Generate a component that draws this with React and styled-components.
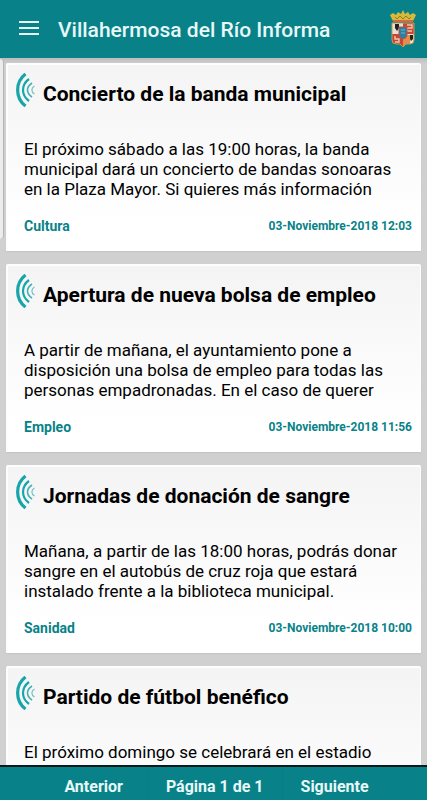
import React from 'react';
import styled, { createGlobalStyle } from 'styled-components';

const TEAL = '#088288';

const Global = createGlobalStyle`
  * { box-sizing: border-box; }
  body {
    margin: 0;
    background: #d0d0d0;
    font-family: Roboto, "Noto Sans", sans-serif;
    color: #000;
  }
`;

const Screen = styled.div`
  display: flex;
  flex-direction: column;
  height: 100vh;
  overflow: hidden;
`;

const TopBar = styled.header`
  display: flex;
  align-items: center;
  flex: none;
  height: 58px;
  padding: 0 10px 0 19px;
  background: ${TEAL};
  color: #e8f8f8;
`;

const MenuButton = styled.button`
  display: flex;
  margin: 0 19px 3px 0;
  padding: 0;
  border: 0;
  background: none;
  color: inherit;
`;

const AppTitle = styled.h1`
  flex: 1;
  margin: 2px 0 0;
  font-size: 21px;
  line-height: 24px;
  font-weight: 500;
  white-space: nowrap;
`;

const Feed = styled.main`
  position: relative;
  display: flex;
  flex-direction: column;
  gap: 13px;
  flex: 1;
  min-height: 0;
  overflow: hidden;
  padding: 5px 6px 0;
  background: linear-gradient(#bcbcbc, #d0d0d0 6px);
`;

const EdgeGlow = styled.div`
  position: absolute;
  left: 0;
  top: 1px;
  width: 4px;
  height: 180px;
  border-right: 1px solid #b4b4b4;
  border-radius: 0 4px 4px 0;
  background: #ececec;
`;

const Card = styled.article`
  flex: none;
  min-height: 188px;
  padding: 0 8px 0 16px;
  border: solid #fdfdfd;
  border-width: 2px 1px 0 2px;
  border-radius: 2px 2px 0 0;
  background: linear-gradient(#f4f4f4, #fff 85%);
  box-shadow: 0 1px 1px #c4c4c4;
`;

const CardHead = styled.div`
  display: flex;
  align-items: flex-start;
  gap: 8px;
  height: 58px;
  margin-left: -8px;
  padding-top: 8px;
`;

const CardTitle = styled.h2`
  margin: 7px 0 0;
  font-size: 21px;
  line-height: 28px;
  font-weight: 700;
  white-space: nowrap;
`;

const Excerpt = styled.p`
  margin: 16px 0 0;
  font-size: 17px;
  line-height: 20px;
  white-space: pre-line;
`;

const Meta = styled.footer`
  display: flex;
  justify-content: space-between;
  margin-top: 18px;
  line-height: 18px;
  font-weight: 700;
  color: ${TEAL};
`;

const Topic = styled.span`
  font-size: 14px;
`;

const Posted = styled.time`
  font-size: 12px;
`;

const Pager = styled.nav`
  display: flex;
  justify-content: center;
  flex: none;
  height: 35px;
  border-top: 2px solid #051a1b;
  background: ${TEAL};
`;

const pagerText = `
  padding: 4px 18px 0;
  font: 700 16px/32px Roboto, sans-serif;
  color: #e8f8f8;
`;

const PagerButton = styled.button`
  ${pagerText}
  border: 0;
  background: none;

  &:first-child {
    padding-left: 24px;
    padding-right: 24px;
  }
`;

const PagerStatus = styled.span`
  ${pagerText}
  border: solid #0b7c82;
  border-width: 0 1px;
`;

const MenuIcon = () => (
  <svg width="20" height="16" viewBox="0 0 20 16" aria-hidden="true">
    <path d="M0 2h20M0 8h20M0 14h20" stroke="currentColor" strokeWidth="2" />
  </svg>
);

const WaveIcon = () => (
  <svg width="19" height="34" viewBox="0 0 19 34" fill="none" stroke="#18a5aa" aria-hidden="true">
    <path d="M9.5 1C-1 9-1 25 9.5 33" strokeWidth="3.2" />
    <path d="M13 6C5 12 5 22 13 28" strokeWidth="2.2" />
    <path d="M16 10C10 14 10 20 16 24" strokeWidth="1.6" stroke="#45b0b4" />
    <path d="M18.5 13C15 15 15 19 18.5 21" strokeWidth="1.2" stroke="#74c0c3" />
  </svg>
);

const Crest = () => (
  <svg width="28" height="38" viewBox="0 0 28 38" role="img" aria-label="Escudo municipal">
    <path d="M4 11 1 5l3-2 3 2 2-3 3 2 2-4 2 4 3-2 2 3 3-2 3 2-3 6z" fill="#d9b93c" />
    <path d="M6 7l2 2 3-3 3 3 3-3 3 3 2-2" fill="none" stroke="#94792a" />
    <path d="M4 11h20" stroke="#cf6b45" strokeWidth="2" />
    <path d="M3 13h22v17q0 4-4 4h-4l-3 3-3-3H7q-4 0-4-4z" fill="#e9e0d4" />
    <path d="M14 13h11v11H14zM3 24h11v13l-3-3H7q-4 0-4-4z" fill="#cb4437" />
    <path d="M14 25h7v9h-4l-3 3z" fill="#e58b4c" />
    <path d="M6 14v4l2 3 2-3v-4zM21 25v4l1 2 2-2v-4z" fill="#241f22" />
    <path d="M18 15h5v3h-5v3h5M6 26v3h4v3H6" fill="none" stroke="#e7c9b4" strokeWidth="1.4" />
    <path d="M10 17h8v8q0 3-4 4-4-1-4-4z" fill="#2c7fa3" stroke="#b4553f" />
    <path d="M12 20h4M12 23h4" stroke="#75b6b9" />
    <path d="M3 13h22v17q0 4-4 4h-4l-3 3-3-3H7q-4 0-4-4z" fill="none" stroke="#c69a4b" />
  </svg>
);

const news = [
  {
    title: 'Concierto de la banda municipal',
    text: 'El próximo sábado a las 19:00 horas, la banda\nmunicipal dará un concierto de bandas sonoaras\nen la Plaza Mayor. Si quieres más información',
    topic: 'Cultura',
    date: '03-Noviembre-2018 12:03',
  },
  {
    title: 'Apertura de nueva bolsa de empleo',
    text: 'A partir de mañana, el ayuntamiento pone a\ndisposición una bolsa de empleo para todas las\npersonas empadronadas. En el caso de querer',
    topic: 'Empleo',
    date: '03-Noviembre-2018 11:56',
  },
  {
    title: 'Jornadas de donación de sangre',
    text: 'Mañana, a partir de las 18:00 horas, podrás donar\nsangre en el autobús de cruz roja que estará\ninstalado frente a la biblioteca municipal.',
    topic: 'Sanidad',
    date: '03-Noviembre-2018 10:00',
  },
  {
    title: 'Partido de fútbol benéfico',
    text: 'El próximo domingo se celebrará en el estadio',
  },
];

export default function App() {
  return (
    <Screen>
      <Global />
      <TopBar>
        <MenuButton aria-label="Abrir menú"><MenuIcon /></MenuButton>
        <AppTitle>Villahermosa del Río Informa</AppTitle>
        <Crest />
      </TopBar>
      <Feed>
        <EdgeGlow />
        {news.map((item) => (
          <Card key={item.title}>
            <CardHead>
              <WaveIcon />
              <CardTitle>{item.title}</CardTitle>
            </CardHead>
            <Excerpt>{item.text}</Excerpt>
            {item.topic && (
              <Meta>
                <Topic>{item.topic}</Topic>
                <Posted>{item.date}</Posted>
              </Meta>
            )}
          </Card>
        ))}
      </Feed>
      <Pager aria-label="Paginación">
        <PagerButton>Anterior</PagerButton>
        <PagerStatus>Página 1 de 1</PagerStatus>
        <PagerButton>Siguiente</PagerButton>
      </Pager>
    </Screen>
  );
}
